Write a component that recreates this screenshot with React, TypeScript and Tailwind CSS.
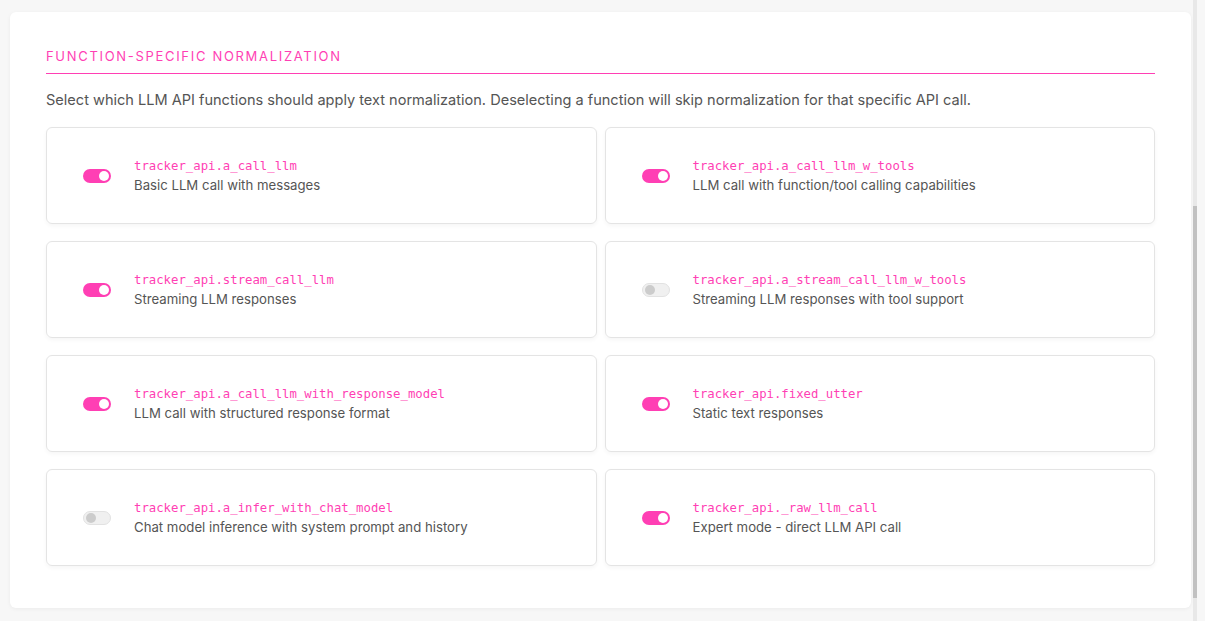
import { useState } from 'react';

const fns = [
  { name: 'tracker_api.a_call_llm', desc: 'Basic LLM call with messages', on: true },
  { name: 'tracker_api.a_call_llm_w_tools', desc: 'LLM call with function/tool calling capabilities', on: true },
  { name: 'tracker_api.stream_call_llm', desc: 'Streaming LLM responses', on: true },
  { name: 'tracker_api.a_stream_call_llm_w_tools', desc: 'Streaming LLM responses with tool support', on: false },
  { name: 'tracker_api.a_call_llm_with_response_model', desc: 'LLM call with structured response format', on: true },
  { name: 'tracker_api.fixed_utter', desc: 'Static text responses', on: true },
  { name: 'tracker_api.a_infer_with_chat_model', desc: 'Chat model inference with system prompt and history', on: false },
  { name: 'tracker_api._raw_llm_call', desc: 'Expert mode - direct LLM API call', on: true },
];

// small pill switch
const Toggle = ({ on, onClick }: { on: boolean; onClick: () => void }) => (
  <button
    onClick={onClick}
    className={`flex items-center w-[28px] h-[14px] rounded-full px-[2px] shrink-0 ${
      on ? 'bg-[#ff3fb4] justify-end' : 'bg-[#f0f0f0] border border-[#e2e2e2] justify-start'
    }`}
  >
    <span className={`block w-[10px] h-[10px] rounded-full ${on ? 'bg-white' : 'bg-[#cccccc]'}`} />
  </button>
);

export default function App() {
  const [state, setState] = useState(fns.map((f) => f.on));

  return (
    <div className="w-full h-[621px] bg-[#f7f7f7] flex" style={{ fontFamily: 'Inter, "Noto Sans", sans-serif' }}>
      <div className="flex-1 pl-[10px] pr-[1px] pt-[12px]">
        <div className="bg-white rounded-md shadow-[0_1px_4px_rgba(0,0,0,0.05)] h-[596px] px-[36px] pt-[35px]">
          <h2 className="text-[13px] tracking-[0.13em] text-[#ff3fb4] pb-[6px] border-b border-[#ff3fb4]">
            FUNCTION-SPECIFIC NORMALIZATION
          </h2>
          <p className="text-[14.55px] text-[#555555] mt-[16px]">
            Select which LLM API functions should apply text normalization. Deselecting a function will skip normalization for that specific API call.
          </p>
          <div className="grid grid-cols-2 gap-x-[8px] gap-y-[17px] mt-[16px]">
            {fns.map((f, i) => (
              <div
                key={f.name}
                className="h-[97px] rounded-md border border-[#e4e4e4] shadow-[0_2px_4px_rgba(0,0,0,0.04)] flex items-center pl-[36px]"
              >
                <Toggle on={state[i]} onClick={() => setState(state.map((v, j) => (j === i ? !v : v)))} />
                <div className="ml-[23px] flex flex-col">
                  <span className="text-[12.3px] leading-[19px] text-[#ff3fb4]" style={{ fontFamily: '"DejaVu Sans Mono", monospace' }}>
                    {f.name}
                  </span>
                  <span className="text-[13.2px] leading-[19px] text-[#555555]">{f.desc}</span>
                </div>
              </div>
            ))}
          </div>
        </div>
      </div>
      {/* fake scrollbar */}
      <div className="w-[13px] flex">
        <div className="w-[4px] ml-[1px] flex flex-col bg-[#e8e8e8]">
          <div className="h-[206px]" />
          <div className="h-[392px] bg-[#c1c1c1]" />
        </div>
      </div>
    </div>
  );
}
